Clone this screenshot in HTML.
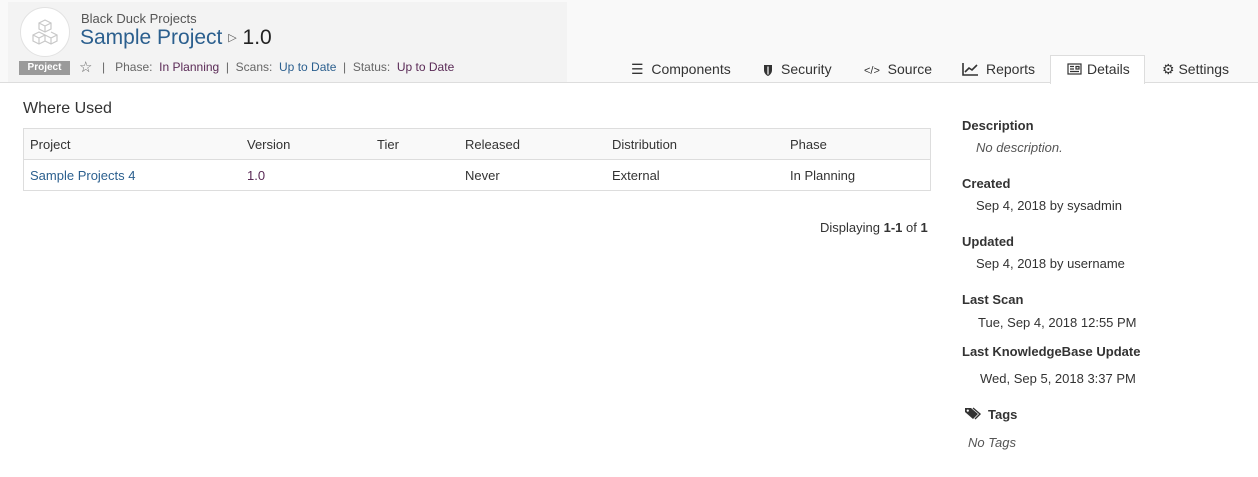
<!DOCTYPE html>
<html><head><style>
*{margin:0;padding:0;box-sizing:border-box}
body{width:1258px;height:477px;background:#fff;font-family:"Liberation Sans",sans-serif;color:#333;position:relative;overflow:hidden;font-size:13px}
.a{position:absolute;white-space:nowrap}
.top{position:absolute;left:0;top:0;width:1258px;height:83px;background:#f9f9f9;border-bottom:1px solid #ddd}
.hb{position:absolute;left:8px;top:2px;width:559px;height:80px;background:#f3f3f3}
.tab{position:absolute;top:61px;font-size:14px;color:#333}
.lbl{font-weight:bold;font-size:13px;color:#333}
</style></head><body>
<div class="top"></div>
<div class="hb"></div>
<div class="a" style="left:20px;top:7px;width:50px;height:50px;border-radius:50%;background:#fff;border:1px solid #e2e2e2"></div>
<svg class="a" style="left:29px;top:17px" width="32" height="30" viewBox="0 0 32 30" fill="none" stroke="#c8c8c8" stroke-width="1.2"><path d="M16 3l6 3v6l-6 3-6-3V6z M10 6l6 3 6-3 M16 9v6 M10 15l6 3v6l-6 3-6-3v-6z M4 18l6 3 6-3 M10 21v6 M22 15l6 3v6l-6 3-6-3 M16 18l6 3 6-3 M22 21v6"/></svg>
<div class="a" style="left:81px;top:11px;font-size:13px;color:#555">Black Duck Projects</div>
<div class="a" style="left:80px;top:26px;font-size:21px;color:#2b5f8e">Sample Project <span style="font-size:11px;color:#555;vertical-align:3px">▷</span> <span style="color:#222">1.0</span></div>
<div class="a" style="left:19px;top:61px;width:51px;height:14px;background:#9a9a9a;color:#fff;font-size:10px;font-weight:bold;text-align:center;line-height:14px">Project</div>
<div class="a" style="left:79px;top:58px;font-size:15px;color:#666">☆</div>
<div class="a" style="left:102px;top:60px;font-size:12px;color:#666">|&nbsp;&nbsp; Phase:&nbsp; <span style="color:#5a2a56">In Planning</span>&nbsp; | &nbsp;Scans:&nbsp; <span style="color:#2b5f8e">Up to Date</span>&nbsp; | &nbsp;Status:&nbsp; <span style="color:#5a2a56">Up to Date</span></div>
<div class="a" style="left:1050px;top:55px;width:95px;height:29px;background:#fff;border:1px solid #ddd;border-bottom:none"></div>
<div class="tab a" style="left:631px">☰&nbsp; Components</div>
<svg class="a" style="left:763px;top:64px" width="10" height="12" viewBox="0 0 10 12"><path d="M1 1h8v5c0 3-2 5-4 6-2-1-4-3-4-6z" fill="#333"/><path d="M5 2.5v8" stroke="#fff" stroke-width="1.2"/></svg>
<div class="tab a" style="left:781px">Security</div>
<div class="tab a" style="left:864px"><span style="font-size:11px">&lt;/&gt;</span>&nbsp; Source</div>
<svg class="a" style="left:962px;top:62px" width="16" height="14" viewBox="0 0 16 14" fill="none" stroke="#333" stroke-width="1.6"><path d="M1 1v12h15"/><path d="M3 10l4-4 3 2 5-5"/></svg>
<div class="tab a" style="left:986px">Reports</div>
<svg class="a" style="left:1067px;top:63px" width="15" height="12" viewBox="0 0 15 12" fill="none" stroke="#333" stroke-width="1.2"><rect x="1" y="1" width="13" height="10"/><path d="M3 3.5h4M3 6h4M3 8.5h9M9 3.5h3v2.5H9z"/></svg>
<div class="tab a" style="left:1087px">Details</div>
<div class="tab a" style="left:1162px">⚙ Settings</div>
<div class="a" style="left:23px;top:100px;font-size:16px;color:#333">Where Used</div>
<div class="a" style="left:23px;top:128px;width:908px;height:63px;border:1px solid #ddd">
<div style="height:31px;background:#f9f9f9;border-bottom:1px solid #ddd"></div></div>
<div class="a" style="left:30px;top:137px">Project</div><div class="a" style="left:247px;top:137px">Version</div><div class="a" style="left:377px;top:137px">Tier</div><div class="a" style="left:465px;top:137px">Released</div><div class="a" style="left:612px;top:137px">Distribution</div><div class="a" style="left:790px;top:137px">Phase</div>
<div class="a" style="left:30px;top:168px;color:#2b5f8e">Sample Projects 4</div><div class="a" style="left:247px;top:168px;color:#5a2a56">1.0</div><div class="a" style="left:465px;top:168px">Never</div><div class="a" style="left:612px;top:168px">External</div><div class="a" style="left:790px;top:168px">In Planning</div>
<div class="a" style="left:820px;top:220px">Displaying <b>1-1</b> of <b>1</b></div>
<div class="a lbl" style="left:962px;top:118px">Description</div>
<div class="a" style="left:976px;top:140px;font-style:italic;color:#555">No description.</div>
<div class="a lbl" style="left:962px;top:176px">Created</div>
<div class="a" style="left:976px;top:198px">Sep 4, 2018 by sysadmin</div>
<div class="a lbl" style="left:962px;top:234px">Updated</div>
<div class="a" style="left:976px;top:256px">Sep 4, 2018 by username</div>
<div class="a lbl" style="left:962px;top:292px">Last Scan</div>
<div class="a" style="left:978px;top:315px">Tue, Sep 4, 2018 12:55 PM</div>
<div class="a lbl" style="left:962px;top:344px">Last KnowledgeBase Update</div>
<div class="a" style="left:980px;top:371px">Wed, Sep 5, 2018 3:37 PM</div>
<svg class="a" style="left:964px;top:407px" width="18" height="13" viewBox="0 0 18 13"><path d="M1 1h6l7 6-5 5-8-7z" fill="#333"/><circle cx="3.8" cy="3.6" r="1.1" fill="#fff"/><path d="M9 1l7 6-5 5" fill="none" stroke="#333" stroke-width="1.4"/></svg>
<div class="a lbl" style="left:988px;top:407px">Tags</div>
<div class="a" style="left:968px;top:435px;font-style:italic;color:#555">No Tags</div>
</body></html>
